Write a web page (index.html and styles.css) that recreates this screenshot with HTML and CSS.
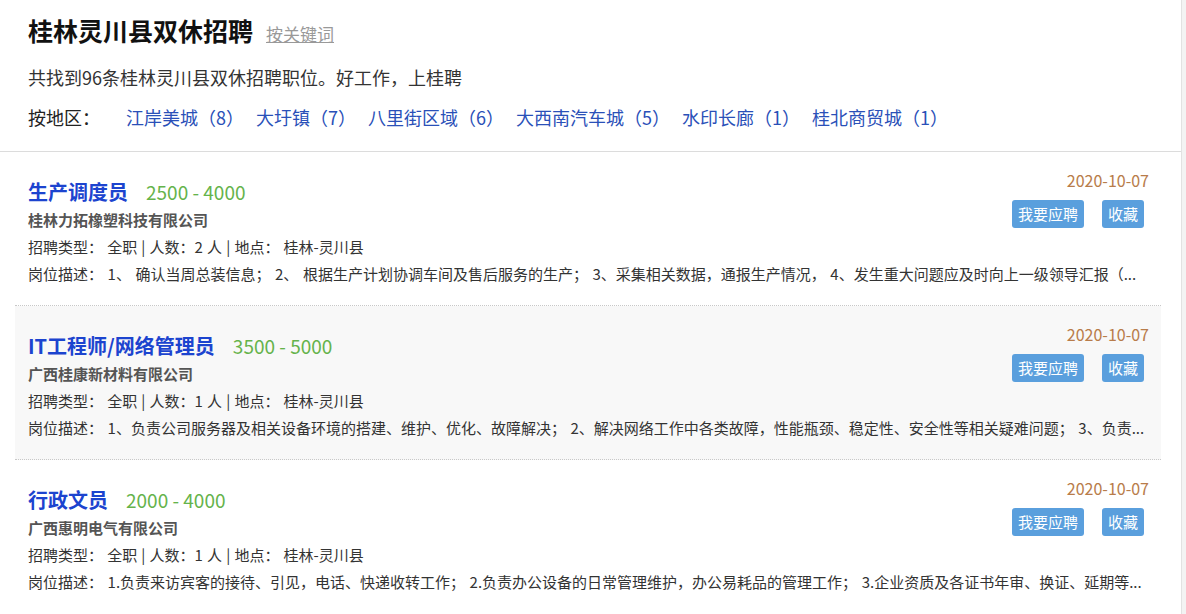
FILE: index.html
```html
<!DOCTYPE html>
<html lang="zh-CN">
<head>
<meta charset="utf-8">
<title>桂林灵川县双休招聘</title>
<link rel="stylesheet" href="styles.css">
</head>
<body>
<div class="page">
  <header class="head">
    <div class="head-title">
      <h1>桂林灵川县双休招聘</h1>
      <a class="kw" href="#">按关键词</a>
    </div>
    <p class="summary">共找到96条桂林灵川县双休招聘职位。好工作，上桂聘</p>
    <div class="areas">
      <span class="areas-label">按地区：</span>
      <a href="#">江岸美城（8）</a>
      <a href="#">大圩镇（7）</a>
      <a href="#">八里街区域（6）</a>
      <a href="#">大西南汽车城（5）</a>
      <a href="#">水印长廊（1）</a>
      <a href="#">桂北商贸城（1）</a>
    </div>
  </header>

  <ul class="jobs">
    <li class="job">
      <div class="job-main">
        <div class="job-title"><a href="#">生产调度员</a><span class="salary">2500 - 4000</span></div>
        <div class="company">桂林力拓橡塑科技有限公司</div>
      </div>
      <div class="job-side">
        <div class="date">2020-10-07</div>
        <div class="btns"><a class="btn" href="#">我要应聘</a><a class="btn" href="#">收藏</a></div>
      </div>
      <div class="info">招聘类型：&nbsp;全职 | 人数：2 人 | 地点：&nbsp;桂林-灵川县</div>
      <div class="desc">岗位描述：&nbsp;1、&nbsp;确认当周总装信息；&nbsp;2、&nbsp;根据生产计划协调车间及售后服务的生产；&nbsp;3、采集相关数据，通报生产情况，&nbsp;4、发生重大问题应及时向上一级领导汇报（...</div>
    </li>
    <li class="job job-alt">
      <div class="job-main">
        <div class="job-title"><a href="#">IT工程师/网络管理员</a><span class="salary">3500 - 5000</span></div>
        <div class="company">广西桂康新材料有限公司</div>
      </div>
      <div class="job-side">
        <div class="date">2020-10-07</div>
        <div class="btns"><a class="btn" href="#">我要应聘</a><a class="btn" href="#">收藏</a></div>
      </div>
      <div class="info">招聘类型：&nbsp;全职 | 人数：1 人 | 地点：&nbsp;桂林-灵川县</div>
      <div class="desc">岗位描述：&nbsp;1、负责公司服务器及相关设备环境的搭建、维护、优化、故障解决；&nbsp;2、解决网络工作中各类故障，性能瓶颈、稳定性、安全性等相关疑难问题；&nbsp;3、负责...</div>
    </li>
    <li class="job">
      <div class="job-main">
        <div class="job-title"><a href="#">行政文员</a><span class="salary">2000 - 4000</span></div>
        <div class="company">广西惠明电气有限公司</div>
      </div>
      <div class="job-side">
        <div class="date">2020-10-07</div>
        <div class="btns"><a class="btn" href="#">我要应聘</a><a class="btn" href="#">收藏</a></div>
      </div>
      <div class="info">招聘类型：&nbsp;全职 | 人数：1 人 | 地点：&nbsp;桂林-灵川县</div>
      <div class="desc">岗位描述：&nbsp;1.负责来访宾客的接待、引见，电话、快递收转工作；&nbsp;2.负责办公设备的日常管理维护，办公易耗品的管理工作；&nbsp;3.企业资质及各证书年审、换证、延期等...</div>
    </li>
  </ul>
</div>
</body>
</html>
```

FILE: styles.css
```css
* { box-sizing: border-box; }
html, body { margin: 0; padding: 0; }
body {
  background: #f3f3f3;
  font-family: "Noto Sans CJK SC", "Noto Sans", sans-serif;
  color: #333;
}
a { text-decoration: none; }

.page {
  width: 1182px;
  min-height: 614px;
  background: #fff;
  border-right: 1px solid #e2e2e2;
}

.head {
  padding: 14px 0 19px 28px;
  border-bottom: 1px solid #dcdcdc;
}
.head-title {
  display: flex;
  align-items: baseline;
  height: 32px;
}
.head-title h1 {
  margin: 0;
  font-size: 25px;
  line-height: 32px;
  font-weight: bold;
  color: #111;
}
.kw {
  margin-left: 13px;
  font-size: 17px;
  color: #999;
  text-decoration: underline;
}
.summary {
  margin: 16px 0 0;
  font-size: 18px;
  line-height: 30px;
  color: #333;
}
.areas {
  margin-top: 10px;
  display: flex;
  font-size: 18px;
  line-height: 30px;
}
.areas-label {
  width: 98px;
  color: #222;
}
.areas a {
  color: #2a50b8;
  margin-right: 12px;
}

.jobs {
  list-style: none;
  margin: 0;
  padding: 0 20px 0 15px;
}
.job {
  display: grid;
  grid-template-columns: 1fr auto;
  padding: 15px 12px 18px 13px;
  border-bottom: 1px dotted #c8c8c8;
}
.job-alt { background: #f8f8f8; }
.job:last-child { border-bottom: none; }

.job-main { padding-top: 11px; }
.job-title {
  display: flex;
  align-items: baseline;
  height: 28px;
  line-height: 28px;
}
.job-title a {
  font-size: 20px;
  font-weight: bold;
  color: #1c44cf;
}
.salary {
  margin-left: 18px;
  font-size: 19px;
  color: #65b34b;
}
.company {
  font-size: 15px;
  line-height: 27px;
  font-weight: bold;
  color: #555;
}
.job-side {
  display: flex;
  flex-direction: column;
  align-items: flex-end;
}
.date {
  font-size: 16px;
  line-height: 26px;
  color: #b87c4a;
}
.btns {
  margin-top: 7px;
  margin-right: 5px;
  display: flex;
  gap: 18px;
}
.btn {
  display: block;
  height: 28px;
  line-height: 28px;
  padding: 0 6px;
  background: #5a9fdd;
  color: #fff;
  font-size: 15px;
  border-radius: 3px;
}
.info, .desc {
  grid-column: 1 / -1;
  font-size: 15px;
  line-height: 27px;
  color: #333;
}
.info { word-spacing: 0.8px; }
.desc {
  white-space: nowrap;
  word-spacing: 1.2px;
}
```
